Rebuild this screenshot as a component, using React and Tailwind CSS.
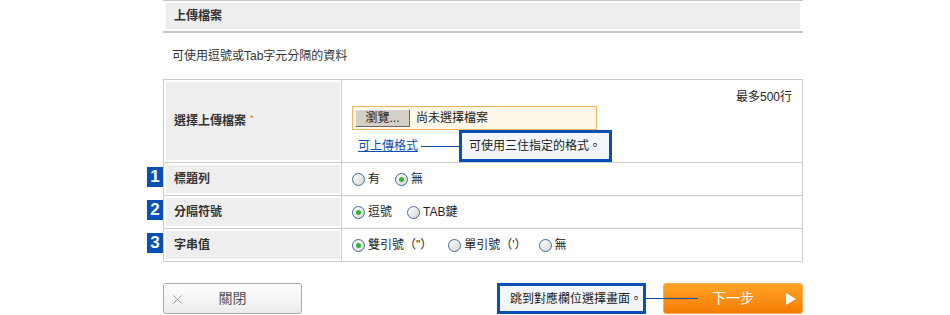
import React from 'react'

const font = "font-['Liberation_Sans','Noto_Sans_CJK_TC',sans-serif]"

function Radio({ checked, label, className = '' }) {
  return (
    <label className={`flex items-center gap-[3px] ${className}`}>
      <span className="w-[13px] h-[13px] rounded-full border border-[#3f6b98] bg-gradient-to-br from-white to-[#d6d6d6] flex items-center justify-center">
        {checked && <span className="w-[5px] h-[5px] rounded-full bg-[#2fb52f]" />}
      </span>
      <span className="text-[12px] leading-[14px] text-[#222]">{label}</span>
    </label>
  )
}

function Badge({ n }) {
  return (
    <span className="absolute left-[-17px] top-[4px] w-[16px] h-[20px] bg-[#0a50b4] text-white text-[17px] leading-[20px] font-bold text-center">
      {n}
    </span>
  )
}

function Label({ children, badge }) {
  return (
    <div className="relative w-[178px] pl-[2px] pr-[1px] py-[2px] border-r border-[#cccccc] flex">
      {badge && <Badge n={badge} />}
      <div className="flex-1 bg-[#eeeeee] flex items-center pl-[8px] text-[12px] font-bold text-[#333]">
        {children}
      </div>
    </div>
  )
}

const rows = [
  { n: 1, label: '標題列', opts: [{ t: '有' }, { t: '無', c: true }], gaps: ['', 'ml-[15px]'] },
  { n: 2, label: '分隔符號', opts: [{ t: '逗號', c: true }, { t: 'TAB鍵' }], gaps: ['', 'ml-[15px]'] },
  { n: 3, label: '字串值', opts: [{ t: '雙引號（"）', c: true }, { t: "單引號（'）" }, { t: '無' }], gaps: ['', 'ml-[16px]', 'ml-[12px]'] },
]

export default function App() {
  return (
    <div className={`w-[950px] h-[315px] bg-white overflow-hidden ${font}`}>
      <div className="ml-[163px] w-[640px]">
        {/* Header */}
        <div className="h-[33px] border-t border-b-2 border-[#c8c8c8] px-[3px] pt-[2px] pb-[2px]">
          <div className="h-[26px] bg-[#eeeeee] flex items-center pl-[8px] text-[12px] font-bold text-[#333]">上傳檔案</div>
        </div>

        <div className="h-[46px] flex items-center pl-[9px] text-[12px] text-[#333]">可使用逗號或Tab字元分隔的資料</div>

        {/* Table */}
        <div className="border-t border-l border-r border-[#cccccc]">
          <div className="flex h-[83px] border-b border-[#cccccc]">
            <Label>
              選擇上傳檔案<span className="ml-[4px] text-[9px] text-[#e07020] font-normal -mt-[4px]">*</span>
            </Label>
            <div className="flex-1 pl-[10px] pr-[10px] pt-[10px] flex flex-col">
              <div className="text-right text-[12px] leading-[14px] text-[#222]">最多500行</div>
              <div className="mt-[2px] w-[245px] h-[24px] border border-[#f0b464] bg-[#fff8e8] flex items-center pl-[2px]">
                <span className="w-[55px] h-[18px] bg-[#d4d0c8] border border-t-white border-l-white border-r-[#666] border-b-[#666] text-[12px] leading-[16px] text-center text-[#222]">瀏覽...</span>
                <span className="ml-[6px] text-[12px] text-[#222]">尚未選擇檔案</span>
              </div>
              <div className="flex items-center pl-[6px]">
                <a className="text-[12px] text-[#0b4fb0] underline">可上傳格式</a>
                <span className="ml-[3px] w-[38px] h-px bg-[#0a4aa8]" />
                <div className="w-[153px] h-[32px] border-[3px] border-[#0a50b4] bg-[#f3f7fb] flex items-center pl-[7px] text-[12px] text-[#222]">
                  可使用三住指定的格式。
                </div>
              </div>
            </div>
          </div>

          {rows.map((r) => (
            <div key={r.n} className="flex h-[33px] border-b border-[#cccccc]">
              <Label badge={r.n}>{r.label}</Label>
              <div className="flex-1 pl-[10px] flex items-center">
                {r.opts.map((o, i) => (
                  <Radio key={o.t} checked={o.c} label={o.t} className={r.gaps[i]} />
                ))}
              </div>
            </div>
          ))}
        </div>

        {/* Buttons */}
        <div className="mt-[21px] flex justify-between">
          <button className="w-[139px] h-[31px] rounded-[3px] border border-[#aaaaaa] bg-gradient-to-b from-white to-[#ececec] relative flex items-center justify-center">
            <svg className="absolute left-[9px] top-[11px]" width="9" height="9" viewBox="0 0 9 9">
              <path d="M0.5 0.5L8.5 8.5M8.5 0.5L0.5 8.5" stroke="#999" strokeWidth="1" />
            </svg>
            <span className="text-[14px] text-[#555]">關閉</span>
          </button>

          <div className="flex items-center relative">
            <div className="w-[149px] h-[31px] border-[3px] border-[#0a50b4] bg-[#f3f7fb] flex items-center pl-[10px] text-[12px] text-[#222]">
              跳到對應欄位選擇畫面。
            </div>
            <span className="absolute left-[149px] top-[15px] w-[52px] h-px bg-[#0a4aa8] z-10" />
            <button className="ml-[17px] w-[140px] h-[31px] rounded-[3px] border border-[#f6b04c] bg-gradient-to-b from-[#ffa324] to-[#f47c00] relative flex items-center justify-center">
              <span className="text-[14px] text-white">下一步</span>
              <svg className="absolute right-[6px] top-[9px]" width="10" height="12" viewBox="0 0 10 12">
                <polygon points="0,0 10,6 0,12" fill="white" />
              </svg>
            </button>
          </div>
        </div>
      </div>
    </div>
  )
}
